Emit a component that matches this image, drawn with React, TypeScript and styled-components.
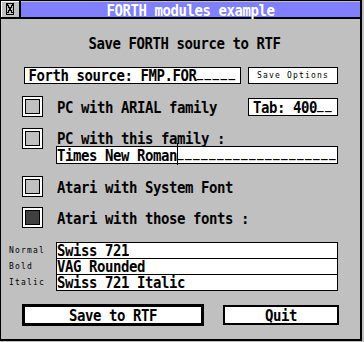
import styled, { createGlobalStyle } from "styled-components";

const GlobalStyle = createGlobalStyle`
  html, body {
    margin: 0;
    padding: 0;
    background: #c0c0c0;
  }
  body {
    font-family: "DejaVu Sans Mono", "Liberation Mono", monospace;
    font-weight: bold;
    font-size: 14px;
    letter-spacing: -0.43px;
  }
`;

const Window = styled.div`
  width: 362px;
  height: 341px;
  box-sizing: border-box;
  border-left: 1px solid #000;
  border-top: 1px solid #000;
  border-right: 2px solid #000;
  border-bottom: 2px solid #000;
  background: #c0c0c0;
  display: flex;
  flex-direction: column;
`;

const TitleBar = styled.div`
  height: 18px;
  box-sizing: border-box;
  border-bottom: 2px solid #000;
  display: flex;
`;

const CloseBox = styled.div`
  width: 20px;
  box-sizing: border-box;
  border-right: 2px solid #000;
  background: #c0c0c0;
  box-shadow: inset 1px 1px 0 #fff;
  display: flex;
  align-items: center;
  justify-content: center;
`;

const TitleText = styled.div`
  flex: 1;
  background: #8080ff;
  color: #fff;
  line-height: 16px;
  text-align: center;
  margin-top: 1px;
`;

// Atari system font is taller than wide; stretch the glyphs a bit
const Text = styled.span`
  display: inline-block;
  line-height: 12px;
  transform: scaleY(1.18);
  white-space: pre;
`;

// underscores drawn as separate dashes like the bitmap font
const Blank = styled.span`
  font-size: 11px;
  letter-spacing: 1.38px;
  vertical-align: 3px;
`;

const Body = styled.div`
  padding: 0 22px 0 8px;
  display: flex;
  flex-direction: column;
`;

const Heading = styled.div`
  margin-top: 16px;
  line-height: 16px;
  text-align: center;
  padding-left: 22px;
`;

const Row = styled.div<{ $top: number; $align?: string }>`
  margin-top: ${(p) => p.$top}px;
  padding-left: 13px;
  display: flex;
  align-items: ${(p) => p.$align ?? "center"};
`;

const Field = styled.div<{ $w: number; $h: number }>`
  width: ${(p) => p.$w}px;
  height: ${(p) => p.$h}px;
  box-sizing: border-box;
  border: 1px solid #000;
  background: #fff;
  line-height: ${(p) => p.$h - 2}px;
  text-align: center;
  white-space: pre;
  position: relative;
`;

const SourceField = styled(Field)`
  margin-left: 2px;
`;

const SmallButton = styled.div`
  width: 90px;
  height: 17px;
  box-sizing: border-box;
  border: 1px solid #000;
  background: #fff;
  margin-left: 7px;
  font-weight: normal;
  font-size: 8px;
  letter-spacing: 1.18px;
  line-height: 15px;
  text-align: center;
`;

const Checkbox = styled.div`
  width: 21px;
  height: 21px;
  box-sizing: border-box;
  border: 1px solid #000;
  background: #fff;
  padding: 2px;
  flex-shrink: 0;
`;

const CheckInner = styled.div<{ $checked?: boolean }>`
  width: 100%;
  height: 100%;
  box-sizing: border-box;
  border: 1px solid #000;
  background: ${(p) => (p.$checked ? "#404040" : "#c0c0c0")};
`;

const Label = styled.div`
  margin-left: 14px;
  line-height: 16px;
  white-space: pre;
`;

const TabField = styled(Field)`
  margin-left: auto;
`;

const Column = styled.div`
  margin-left: 13px;
  display: flex;
  flex-direction: column;
`;

const ColumnLabel = styled.div`
  margin-top: 2px;
  padding-left: 1px;
  line-height: 16px;
  white-space: pre;
`;

const Cursor = styled.div`
  position: absolute;
  left: 120px;
  top: -4px;
  width: 1px;
  height: 22px;
  background: #000;
`;

const FontGroup = styled.div`
  margin-top: 14px;
  display: flex;
  flex-direction: column;
`;

const FontRow = styled.div`
  display: flex;
  align-items: center;
`;

const SmallLabel = styled.div`
  width: 47px;
  font-weight: normal;
  font-size: 8px;
  letter-spacing: 1.18px;
`;

const FontField = styled.div<{ $last?: boolean }>`
  width: 282px;
  height: ${(p) => (p.$last ? 17 : 16)}px;
  box-sizing: border-box;
  border: 1px solid #000;
  border-bottom-width: ${(p) => (p.$last ? 1 : 0)}px;
  background: #fff;
  line-height: 15px;
  white-space: pre;
`;

const ButtonRow = styled.div`
  margin-top: 13px;
  padding-left: 13px;
  display: flex;
  align-items: center;
`;

const Button = styled.div<{ $default?: boolean; $w: number }>`
  width: ${(p) => p.$w}px;
  height: ${(p) => (p.$default ? 22 : 20)}px;
  box-sizing: border-box;
  border: ${(p) => (p.$default ? 3 : 2)}px solid #000;
  background: #fff;
  display: flex;
  align-items: center;
  justify-content: center;
  line-height: 16px;
  flex-shrink: 0;
`;

const QuitButton = styled(Button)`
  margin-left: 19px;
`;

const CloseGlyph = () => (
  <svg width="8" height="12" viewBox="0 0 8 12" shapeRendering="crispEdges">
    <path d="M0 0h8v1H0zM0 11h8v1H0zM0 0h1v12H0zM7 0h1v12H7z" fill="#000" />
    <path d="M1.5 1.5L6.5 10.5M6.5 1.5L1.5 10.5" stroke="#000" strokeWidth="1.4" />
  </svg>
);

const fonts = [
  { style: "Normal", name: "Swiss 721" },
  { style: "Bold", name: "VAG Rounded" },
  { style: "Italic", name: "Swiss 721 Italic" },
];

export default function App() {
  return (
    <>
      <GlobalStyle />
      <Window>
        <TitleBar>
          <CloseBox>
            <CloseGlyph />
          </CloseBox>
          <TitleText>
            <Text>FORTH modules example</Text>
          </TitleText>
        </TitleBar>
        <Body>
          <Heading>
            <Text>Save FORTH source to RTF</Text>
          </Heading>
          <Row $top={16}>
            <SourceField $w={217} $h={17}>
              <Text>
                Forth source: FMP.FOR<Blank>_____</Blank>
              </Text>
            </SourceField>
            <SmallButton>Save Options</SmallButton>
          </Row>
          <Row $top={12}>
            <Checkbox>
              <CheckInner />
            </Checkbox>
            <Label>
              <Text>PC with ARIAL family</Text>
            </Label>
            <TabField $w={90} $h={18}>
              <Text>
                Tab: 400<Blank>__</Blank>
              </Text>
            </TabField>
          </Row>
          <Row $top={11} $align="flex-start">
            <Checkbox>
              <CheckInner />
            </Checkbox>
            <Column>
              <ColumnLabel>
                <Text>PC with this family :</Text>
              </ColumnLabel>
              <Field $w={282} $h={18}>
                <Text>
                  Times New Roman<Blank>____________________</Blank>
                </Text>
                <Cursor />
              </Field>
            </Column>
          </Row>
          <Row $top={12}>
            <Checkbox>
              <CheckInner />
            </Checkbox>
            <Label>
              <Text>Atari with System Font</Text>
            </Label>
          </Row>
          <Row $top={10}>
            <Checkbox>
              <CheckInner $checked />
            </Checkbox>
            <Label>
              <Text>Atari with those fonts :</Text>
            </Label>
          </Row>
          <FontGroup>
            {fonts.map((f, i) => (
              <FontRow key={f.style}>
                <SmallLabel>{f.style}</SmallLabel>
                <FontField $last={i === fonts.length - 1}>
                  <Text>{f.name}</Text>
                </FontField>
              </FontRow>
            ))}
          </FontGroup>
          <ButtonRow>
            <Button $default $w={182}>
              <Text>Save to RTF</Text>
            </Button>
            <QuitButton $w={116}>
              <Text>Quit</Text>
            </QuitButton>
          </ButtonRow>
        </Body>
      </Window>
    </>
  );
}
